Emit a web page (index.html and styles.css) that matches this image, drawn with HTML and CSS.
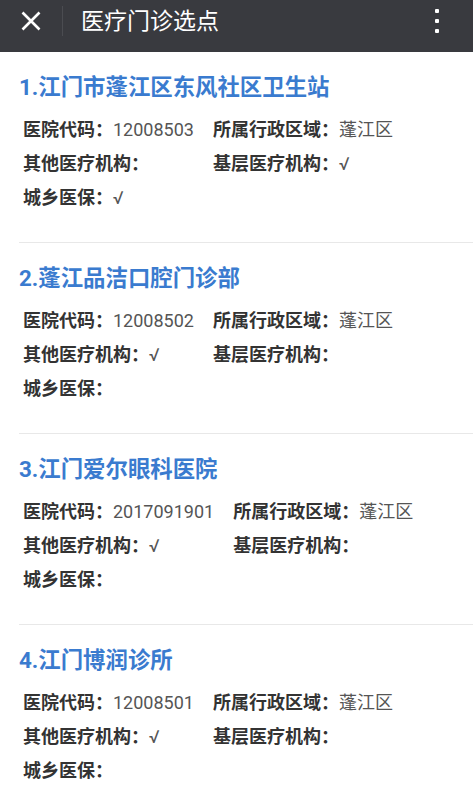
FILE: index.html
```html
<!DOCTYPE html>
<html lang="zh-CN">
<head>
    <meta charset="UTF-8">
    <meta name="viewport" content="width=device-width, initial-scale=1.0">
    <title>医疗门诊选点</title>
    <link rel="stylesheet" href="styles.css">
</head>
<body>
    <header class="top-bar">
        <div class="close-btn">
            <svg width="20" height="20" viewBox="0 0 20 20">
                <path d="M1.5 1.5 L18.5 18.5 M18.5 1.5 L1.5 18.5" stroke="#fff" stroke-width="2.6" fill="none"/>
            </svg>
        </div>
        <div class="divider"></div>
        <h1 class="page-title">医疗门诊选点</h1>
        <div class="more-btn">
            <span></span><span></span><span></span>
        </div>
    </header>

    <ul class="clinic-list">
        <li class="clinic-item">
            <h2 class="clinic-name">1.江门市蓬江区东风社区卫生站</h2>
            <div class="clinic-info">
                <p><b>医院代码：</b>12008503</p>
                <p><b>所属行政区域：</b>蓬江区</p>
                <p><b>其他医疗机构：</b></p>
                <p><b>基层医疗机构：</b>√</p>
                <p><b>城乡医保：</b>√</p>
            </div>
        </li>
        <li class="clinic-item">
            <h2 class="clinic-name">2.蓬江品洁口腔门诊部</h2>
            <div class="clinic-info">
                <p><b>医院代码：</b>12008502</p>
                <p><b>所属行政区域：</b>蓬江区</p>
                <p><b>其他医疗机构：</b>√</p>
                <p><b>基层医疗机构：</b></p>
                <p><b>城乡医保：</b></p>
            </div>
        </li>
        <li class="clinic-item">
            <h2 class="clinic-name">3.江门爱尔眼科医院</h2>
            <div class="clinic-info">
                <p><b>医院代码：</b>2017091901</p>
                <p><b>所属行政区域：</b>蓬江区</p>
                <p><b>其他医疗机构：</b>√</p>
                <p><b>基层医疗机构：</b></p>
                <p><b>城乡医保：</b></p>
            </div>
        </li>
        <li class="clinic-item">
            <h2 class="clinic-name">4.江门博润诊所</h2>
            <div class="clinic-info">
                <p><b>医院代码：</b>12008501</p>
                <p><b>所属行政区域：</b>蓬江区</p>
                <p><b>其他医疗机构：</b>√</p>
                <p><b>基层医疗机构：</b></p>
                <p><b>城乡医保：</b></p>
            </div>
        </li>
    </ul>
</body>
</html>
```

FILE: styles.css
```css
/* Basic Reset */
* {
    margin: 0;
    padding: 0;
    box-sizing: border-box;
}

body {
    font-family: Roboto, "Noto Sans CJK SC", sans-serif;
    background: #fff;
    color: #333;
}

/* Top Bar */
.top-bar {
    display: flex;
    align-items: center;
    height: 52px;
    padding-bottom: 10px;
    background: #393a3f;
    color: #fff;
}

.close-btn {
    width: 62px;
    display: flex;
    justify-content: center;
}

.close-btn svg {
    display: block;
}

.divider {
    width: 1px;
    height: 30px;
    background: #4b4c51;
}

.page-title {
    flex: 1;
    margin: 2px 0 0 18px;
    font-size: 23px;
    font-weight: normal;
    line-height: 30px;
}

.more-btn {
    width: 4px;
    margin-right: 34px;
    display: flex;
    flex-direction: column;
    gap: 6px;
}

.more-btn span {
    width: 4px;
    height: 4px;
    border-radius: 1px;
    background: #fff;
}

/* Clinic List */
.clinic-list {
    list-style: none;
}

.clinic-item {
    margin-left: 19px;
    padding: 20px 0 27px 0;
    border-bottom: 1px solid #e8e8e8;
}

.clinic-name {
    font-size: 22.4px;
    line-height: 30px;
    font-weight: bold;
    color: #3a7bcf;
    margin-bottom: 11px;
}

.clinic-info {
    display: grid;
    grid-template-columns: auto auto;
    justify-content: start;
    column-gap: 19px;
    padding-left: 4px;
}

.clinic-info p {
    font-size: 18px;
    line-height: 34px;
    color: #555;
    white-space: nowrap;
}

.clinic-info b {
    color: #333;
    font-weight: bold;
}
```
